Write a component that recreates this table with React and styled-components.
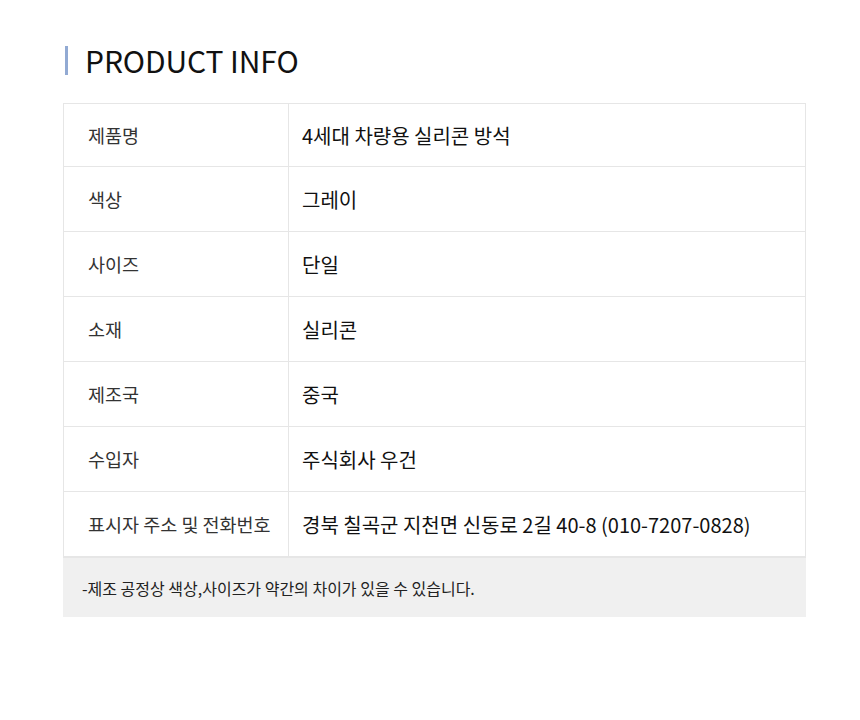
import styled, { createGlobalStyle } from 'styled-components';

const GlobalStyle = createGlobalStyle`
	body {
		margin: 0;
		background: #fff;
		font-family: "Noto Sans CJK KR", "Noto Sans", sans-serif;
		color: #111;
	}
`;

const StyledPage = styled.div`
	padding: 39px 54px 0 63px;
`;

const StyledTitle = styled.h2`
	display: flex;
	align-items: center;
	gap: 17px;
	margin: 0 0 22px 2px;
	font-size: 30px;
	font-weight: 400;
	letter-spacing: -0.1px;
	line-height: 42px;
	color: #111;

	&::before {
		content: '';
		width: 3px;
		height: 29px;
		background: #92aad3;
	}
`;

const StyledTable = styled.div`
	border: 1px solid #e6e6e6;
	border-bottom: none;
`;

const StyledRow = styled.div`
	display: grid;
	grid-template-columns: 225px 1fr;
	height: ${ (p) => p.$height }px;
	border-bottom: 1px solid #e6e6e6;
`;

const StyledLabel = styled.div`
	display: flex;
	align-items: center;
	padding-left: 24px;
	border-right: 1px solid #e6e6e6;
	font-size: 18.5px;
	color: #333;
`;

const StyledValue = styled.div`
	display: flex;
	align-items: center;
	padding-left: 13px;
	font-size: 20px;
	color: #111;
`;

const StyledNote = styled.div`
	display: flex;
	align-items: center;
	height: 59px;
	padding-left: 19px;
	background: #f0f0f0;
	border-top: 1px solid #e6e6e6;
	font-size: 16px;
	color: #222;
`;

const rows = [
	['제품명', '4세대 차량용 실리콘 방석', 62],
	['색상', '그레이', 64],
	['사이즈', '단일', 64],
	['소재', '실리콘', 64],
	['제조국', '중국', 64],
	['수입자', '주식회사 우건', 64],
	['표시자 주소 및 전화번호', '경북 칠곡군 지천면 신동로 2길 40-8 (010-7207-0828)', 64],
];

const App = () => {
	return (
		<StyledPage>
			<GlobalStyle />
			<StyledTitle>PRODUCT INFO</StyledTitle>

			<StyledTable>
				{ rows.map(([label, value, height]) => (
					<StyledRow key={ label } $height={ height }>
						<StyledLabel>{ label }</StyledLabel>
						<StyledValue>{ value }</StyledValue>
					</StyledRow>
				)) }
			</StyledTable>

			<StyledNote>-제조 공정상 색상,사이즈가 약간의 차이가 있을 수 있습니다.</StyledNote>
		</StyledPage>
	);
};

export default App;
